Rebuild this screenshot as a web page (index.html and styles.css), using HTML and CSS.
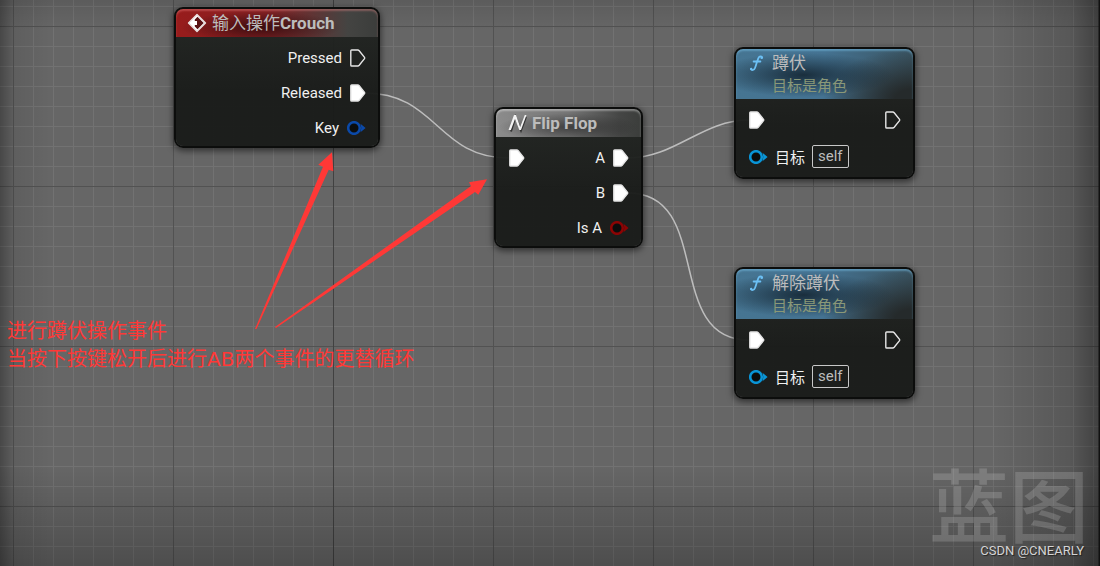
FILE: index.html
```html
<!DOCTYPE html>
<html lang="zh">
<head>
    <meta charset="UTF-8">
    <title>蓝图</title>
    <link rel="stylesheet" href="styles.css">
</head>
<body>
<svg class="defs" width="0" height="0" aria-hidden="true">
    <symbol id="exec" viewBox="0 0 16 18">
        <path d="M1.6 1h6.2q.8 0 1.400.7l5.300 6.600q.5.7 0 1.400l-5.300 6.600q-.6.7-1.400.7H1.600q-.8 0-.8-.8V1.800q0-.8.8-.8z" stroke="#e6e6e6" stroke-width="1.400"/>
    </symbol>
    <symbol id="data" viewBox="0 0 19 14">
        <circle cx="7" cy="7" r="5.800" fill="#0b0d0d" stroke="currentColor" stroke-width="2.600"/>
        <path d="M13.500 2.800Q15 7 13.500 11.200L18.600 7z" fill="currentColor"/>
    </symbol>
    <symbol id="func" viewBox="0 0 20 20">
        <path d="M15.2 4.6c-.3-1.6-2.8-1.6-3.8.5C10 8 9.300 12 8 15c-.9 2.200-3.400 2.700-4 1.200M6.600 8.500h6.800" fill="none" stroke="#6cc0f5" stroke-width="1.800" stroke-linecap="round"/>
        <circle cx="14.600" cy="4.700" r="1.200" fill="#6cc0f5"/>
        <circle cx="4.200" cy="15.900" r="1.200" fill="#6cc0f5"/>
    </symbol>
</svg>

<main class="graph">
    <svg class="wires" aria-hidden="true">
        <path d="M365 93C437 93 437 158 509 158"/>
        <path d="M628 158C675 158 702 120 749 120"/>
        <path d="M628 193C714 193 663 340 749 340"/>
    </svg>

    <section class="node event">
        <header>
            <svg class="icon" viewBox="0 0 20 20">
                <path d="M10 1.500L18.500 10 10 18.500 1.500 10z" fill="#fff" stroke="#e6dcdc" stroke-width="1.400" stroke-linejoin="round"/>
                <path d="M10.500 3.800L16.700 10l-6.200 6.200-2.700-2.700V12H10V8H7.800V6.500z" fill="#5a1214"/>
            </svg>
            <h2>输入操作<b>Crouch</b></h2>
        </header>
        <ul class="pins">
            <li class="out"><span>Pressed</span><svg class="exec"><use href="#exec"/></svg></li>
            <li class="out"><span>Released</span><svg class="exec on"><use href="#exec"/></svg></li>
            <li class="out"><span>Key</span><svg class="data key"><use href="#data"/></svg></li>
        </ul>
    </section>

    <section class="node flip">
        <header>
            <svg class="icon" viewBox="0 0 20 20">
                <path d="M3 17.500L7.500 3l5.500 13.500L18 3" transform="translate(1 1)" fill="none" stroke="#333" stroke-width="2"/>
                <path d="M1.500 17h2.400L8 6l4.300 11h1.700L19.500 2h-1.700l-4.600 12L9 2H7z" fill="#f2f2f2"/>
            </svg>
            <h2><b>Flip Flop</b></h2>
        </header>
        <ul class="pins">
            <li>
                <svg class="exec on"><use href="#exec"/></svg>
                <div class="out"><span>A</span><svg class="exec on"><use href="#exec"/></svg></div>
            </li>
            <li class="out"><span>B</span><svg class="exec on"><use href="#exec"/></svg></li>
            <li class="out"><span>Is A</span><svg class="data bool"><use href="#data"/></svg></li>
        </ul>
    </section>

    <section class="node call crouch">
        <header>
            <svg class="icon"><use href="#func"/></svg>
            <div>
                <h2>蹲伏</h2>
                <p>目标是角色</p>
            </div>
        </header>
        <ul class="pins">
            <li>
                <svg class="exec on"><use href="#exec"/></svg>
                <svg class="exec"><use href="#exec"/></svg>
            </li>
            <li class="in"><svg class="data object"><use href="#data"/></svg><span>目标</span><span class="self">self</span></li>
        </ul>
    </section>

    <section class="node call uncrouch">
        <header>
            <svg class="icon"><use href="#func"/></svg>
            <div>
                <h2>解除蹲伏</h2>
                <p>目标是角色</p>
            </div>
        </header>
        <ul class="pins">
            <li>
                <svg class="exec on"><use href="#exec"/></svg>
                <svg class="exec"><use href="#exec"/></svg>
            </li>
            <li class="in"><svg class="data object"><use href="#data"/></svg><span>目标</span><span class="self">self</span></li>
        </ul>
    </section>

    <svg class="arrows" aria-hidden="true">
        <path d="M255 329L323 166.700 318.300 164.700 332 152.300 333.300 171.300 328.700 169.700 256.500 329z"/>
        <path d="M275 327L471 186 469 182.300 487 179.300 478.300 194.700 475 192 276 328z"/>
    </svg>
    <p class="note">进行蹲伏操作事件<br>当按下按键松开后进行AB两个事件的更替循环</p>

    <div class="mark">蓝图</div>
    <div class="credit">CSDN @CNEARLY</div>
</main>
</body>
</html>
```
FILE: styles.css
```css
body, h2, p, ul {
    margin: 0;
    padding: 0;
}

ul {
    list-style: none;
}

body {
    font-family: Roboto, "Noto Sans CJK SC", sans-serif;
    font-size: 15px;
    color: #f0f0f0;
    background: #666;
}

.defs {
    position: absolute;
}

.graph {
    position: relative;
    min-height: 100vh;
    overflow: hidden;
    background:
        linear-gradient(to right, rgba(0, 0, 0, .3), rgba(0, 0, 0, .08) 14px, transparent 50px),
        linear-gradient(to left, #111 1px, rgba(0, 0, 0, .36) 2px, rgba(0, 0, 0, .14) 30px, transparent 110px),
        linear-gradient(to top, rgba(0, 0, 0, .24), transparent 100px),
        linear-gradient(to bottom, rgba(0, 0, 0, .1), transparent 30px),
        linear-gradient(to right, #414141 1px, transparent 1px) 333px 0 / 1280px 100%,
        linear-gradient(to right, #525252 1px, transparent 1px) 13px 0 / 160px 100%,
        linear-gradient(to bottom, #525252 1px, transparent 1px) 0 26px / 100% 160px,
        linear-gradient(to right, #727272 1px, transparent 1px) 13px 0 / 20px 100%,
        linear-gradient(to bottom, #727272 1px, transparent 1px) 0 6px / 100% 20px,
        #666;
}

.wires, .arrows {
    position: absolute;
    top: 0;
    left: 0;
    width: 100%;
    height: 100%;
    pointer-events: none;
}

.wires {
    fill: none;
    stroke: #bdbdbd;
    stroke-width: 1.5;
}

.arrows {
    fill: #ff3836;
}

/* nodes */
.node {
    position: absolute;
    box-sizing: border-box;
    border: 2px solid #0c0d0c;
    border-radius: 9px;
    background: linear-gradient(rgba(35, 38, 35, .96), rgba(25, 27, 25, .96) 60%);
    background-clip: padding-box;
    box-shadow: 0 2px 6px 1px rgba(0, 0, 0, .5);
}

.event {
    left: 174px;
    top: 7px;
    width: 206px;
}

.flip {
    left: 494px;
    top: 107px;
    width: 149px;
}

.call {
    left: 734px;
    width: 181px;
}

.crouch {
    top: 47px;
}

.uncrouch {
    top: 267px;
}

.node header {
    display: flex;
    gap: 5px;
    height: 28px;
    padding: 0 11px;
    border-radius: 7px 7px 0 0;
}

.event header {
    background:
        radial-gradient(ellipse 80px 16px at 42% 65%, rgba(40, 8, 10, .8), transparent),
        linear-gradient(to right, #981c1c, #832023 45%, #444442 85%, #3b3d3b);
    box-shadow: inset 0 2px 2px rgba(255, 150, 150, .35);
}

.flip header {
    background:
        radial-gradient(ellipse 70px 14px at 50% 65%, rgba(30, 30, 30, .6), transparent),
        linear-gradient(to right, #8c8c8c, #747474 50%, #454645 85%, #3b3d3b);
    box-shadow: inset 0 2px 2px rgba(255, 255, 255, .35);
}

.call header {
    height: 50px;
    background:
        radial-gradient(ellipse 90px 22px at 38% 52%, rgba(18, 34, 46, .85), transparent),
        radial-gradient(ellipse 90px 50px at 100% 100%, #252a2b 20%, transparent),
        linear-gradient(to right, #467592, #447291 50%, #3b5563);
    box-shadow: inset 0 2px 2px rgba(120, 190, 230, .5);
}

.icon {
    flex: none;
    width: 20px;
    height: 28px;
}

.node h2 {
    font-size: 17px;
    line-height: 28px;
    font-weight: 400;
    color: #bcbcbc;
    white-space: nowrap;
}

.node b {
    font-weight: 700;
}

.call p {
    line-height: 18px;
    color: #8a9878;
}

/* pins */
.pins {
    padding: 3px 0 1px;
}

.pins li {
    display: flex;
    align-items: center;
    justify-content: space-between;
    height: 35px;
    padding: 0 12px 0 13px;
}

.call .pins {
    padding: 2px 0;
}

.call .pins li {
    height: 37px;
}

.out {
    display: flex;
    align-items: center;
    gap: 8px;
}

.pins .out {
    justify-content: flex-end;
}

.pins .in {
    justify-content: flex-start;
    gap: 7px;
}

.exec {
    width: 16px;
    height: 18px;
    fill: none;
}

.exec.on {
    fill: #fff;
}

.data {
    width: 19px;
    height: 14px;
    overflow: visible;
}

.key {
    color: #0b49a8;
}

.bool {
    color: #8b0404;
}

.object {
    color: #0994d6;
}

.self {
    padding: 0 5px;
    border: 1px solid #c8c8c8;
    border-radius: 2px;
    line-height: 21px;
    color: #bdbdbd;
}

/* annotation */
.note {
    position: absolute;
    left: 7px;
    top: 317px;
    font: 400 20px/28px "DejaVu Sans", "Noto Sans CJK SC", sans-serif;
    color: #ff3836;
}

.mark {
    position: absolute;
    right: 11px;
    bottom: 25px;
    font: 500 80px/80px "Noto Sans CJK SC", sans-serif;
    color: rgba(255, 255, 255, .16);
}

.credit {
    position: absolute;
    right: 16px;
    bottom: 7px;
    font-size: 13px;
    line-height: 16px;
    color: #d4d4d4;
    text-shadow: 1px 1px 1px #222;
}
```
